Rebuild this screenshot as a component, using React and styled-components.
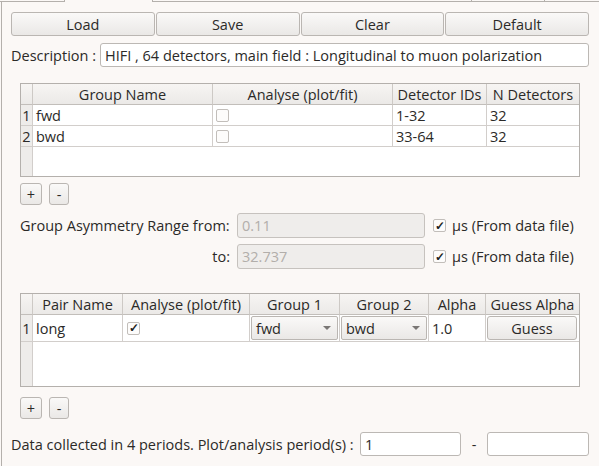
import React from "react";
import styled, { createGlobalStyle } from "styled-components";

const Global = createGlobalStyle`
  html, body { margin: 0; padding: 0; background: #fbf8f6; }
  body { font-family: "Open Sans", "Noto Sans", sans-serif; font-size: 14.5px; color: #2b2a28; }
  * { box-sizing: border-box; }
`;

const Page = styled.div`
  width: 599px;
  height: 466px;
  background: #fbf8f6;
  overflow: hidden;
  display: flex;
  flex-direction: column;
`;

const TabBar = styled.div`
  display: flex;
  height: 2px;
`;

const TabPiece = styled.div`
  width: ${(p) => (p.$w ? `${p.$w}px` : "auto")};
  flex: ${(p) => (p.$w ? "none" : "1")};
  border-bottom: ${(p) => (p.$selected ? "none" : "1px solid #b4b0ac")};
  border-right: ${(p) => (p.$sep ? "1px solid #b4b0ac" : "none")};
`;

const Panel = styled.div`
  flex: 1;
  margin-left: 1px;
  border-left: 1px solid #b4b0ac;
  padding: 10px 10px 0 9px;
  display: flex;
  flex-direction: column;
`;

const ButtonRow = styled.div`
  display: flex;
  gap: 1px;
  height: 24px;
`;

const PushButton = styled.button`
  flex: ${(p) => (p.$w ? "none" : "1")};
  width: ${(p) => (p.$w ? `${p.$w}px` : "auto")};
  height: ${(p) => (p.$h ? `${p.$h}px` : "100%")};
  border: 1px solid #bab6b2;
  border-radius: 3px;
  background: linear-gradient(#faf9f8, #eae8e6);
  font-family: inherit;
  font-size: 14.5px;
  color: #2b2a28;
  padding: 0;
  display: flex;
  align-items: center;
  justify-content: center;
`;

const Row = styled.div`
  display: flex;
  align-items: center;
  margin-top: ${(p) => p.$mt || 0}px;
  margin-left: ${(p) => p.$ml || 0}px;
  gap: ${(p) => p.$gap || 0}px;
`;

const Label = styled.span`
  width: ${(p) => (p.$w ? `${p.$w}px` : "auto")};
  text-align: ${(p) => p.$align || "left"};
  white-space: nowrap;
  flex: none;
`;

const TextField = styled.div`
  width: ${(p) => p.$w}px;
  height: ${(p) => p.$h || 24}px;
  border: 1px solid ${(p) => (p.$disabled ? "#c6c2be" : "#bcb8b4")};
  border-radius: 3px;
  background: ${(p) => (p.$disabled ? "#efedeb" : "#ffffff")};
  color: ${(p) => (p.$disabled ? "#b2aeaa" : "#2b2a28")};
  padding-left: 4px;
  display: flex;
  align-items: center;
  white-space: nowrap;
  overflow: hidden;
  flex: none;
`;

const Check = styled.span`
  width: 13px;
  height: 13px;
  border: 1px solid #c2beba;
  border-radius: 2px;
  background: #fdfcfb;
  display: inline-flex;
  align-items: center;
  justify-content: center;
  flex: none;
  color: #1e1e1e;
  font-size: 12px;
  font-weight: 700;
  line-height: 1;
`;

const CheckWrap = styled.div`
  display: flex;
  align-items: center;
  gap: 6px;
  margin-left: 8px;
`;

const Table = styled.div`
  margin-left: 9px;
  margin-top: ${(p) => p.$mt}px;
  width: 560px;
  height: ${(p) => p.$h}px;
  border: 1px solid #b4b0ac;
  background: #ffffff;
  display: grid;
  grid-template-columns: ${(p) => p.$cols};
  grid-template-rows: ${(p) => p.$rows};
`;

const HeadCell = styled.div`
  background: linear-gradient(#f7f5f3, #ebe9e7);
  border-right: ${(p) => (p.$last ? "none" : "1px solid #cdc9c5")};
  border-bottom: 1px solid #c2beba;
  display: flex;
  align-items: center;
  justify-content: center;
  white-space: nowrap;
  overflow: hidden;
`;

const RowHead = styled.div`
  background: #eeecea;
  border-right: 1px solid #d2cecb;
  border-bottom: ${(p) => (p.$filler ? "none" : "1px solid #d2cecb")};
  display: flex;
  align-items: center;
  justify-content: center;
`;

const Cell = styled.div`
  border-right: ${(p) => (p.$last ? "none" : "1px solid #d2cecb")};
  border-bottom: 1px solid #d2cecb;
  padding: ${(p) => (p.$pad === undefined ? "0 3px" : p.$pad)};
  display: flex;
  align-items: center;
  white-space: nowrap;
  overflow: hidden;
`;

const Filler = styled.div`
  grid-column: 2 / -1;
  background: #ffffff;
`;

const Combo = styled.div`
  width: 100%;
  height: 100%;
  border: 1px solid #bab6b2;
  border-radius: 2px;
  background: linear-gradient(#faf9f8, #eae8e6);
  display: flex;
  align-items: center;
  justify-content: space-between;
  padding: 0 6px 0 4px;
`;

const Arrow = styled.span`
  width: 0;
  height: 0;
  border-left: 4px solid transparent;
  border-right: 4px solid transparent;
  border-top: 4px solid #7a7775;
`;

const SmallButtons = styled.div`
  display: flex;
  gap: 7px;
  margin-left: 9px;
  margin-top: ${(p) => p.$mt}px;
`;

const Dash = styled.span`
  width: 26px;
  text-align: center;
  flex: none;
`;

const groupCols = "12px 180px 180px 94px 92px";
const pairCols = "12px 90px 127px 90px 89px 57px 93px";

const groups = [
  { n: 1, name: "fwd", ids: "1-32", count: "32" },
  { n: 2, name: "bwd", ids: "33-64", count: "32" },
];

export default function App() {
  return (
    <Page>
      <Global />
      <TabBar>
        <TabPiece $w={65} $sep />
        <TabPiece $w={88} $selected $sep />
        <TabPiece $w={319} $sep />
        <TabPiece $w={73} $sep />
        <TabPiece />
      </TabBar>
      <Panel>
        <ButtonRow>
          <PushButton>Load</PushButton>
          <PushButton>Save</PushButton>
          <PushButton>Clear</PushButton>
          <PushButton>Default</PushButton>
        </ButtonRow>

        <Row $mt={7}>
          <Label $w={89}>Description :</Label>
          <TextField $w={489}>HIFI , 64 detectors, main field : Longitudinal to muon polarization</TextField>
        </Row>

        <Table $mt={16} $h={94} $cols={groupCols} $rows="21px 21px 21px 1fr">
          <HeadCell />
          <HeadCell>Group Name</HeadCell>
          <HeadCell>Analyse (plot/fit)</HeadCell>
          <HeadCell>Detector IDs</HeadCell>
          <HeadCell $last>N Detectors</HeadCell>
          {groups.map((g) => (
            <React.Fragment key={g.n}>
              <RowHead>{g.n}</RowHead>
              <Cell>{g.name}</Cell>
              <Cell><Check /></Cell>
              <Cell>{g.ids}</Cell>
              <Cell $last>{g.count}</Cell>
            </React.Fragment>
          ))}
          <RowHead $filler />
          <Filler />
        </Table>

        <SmallButtons $mt={6}>
          <PushButton $w={22} $h={22}>+</PushButton>
          <PushButton $w={20} $h={22}>-</PushButton>
        </SmallButtons>

        <Row $mt={8} $ml={9}>
          <Label $w={210}>Group Asymmetry Range from:</Label>
          <TextField $w={188} $h={25} $disabled style={{ marginLeft: 7 }}>0.11</TextField>
          <CheckWrap>
            <Check>✓</Check>
            <span>μs (From data file)</span>
          </CheckWrap>
        </Row>
        <Row $mt={6} $ml={9}>
          <Label $w={210} $align="right">to:</Label>
          <TextField $w={188} $h={25} $disabled style={{ marginLeft: 7 }}>32.737</TextField>
          <CheckWrap>
            <Check>✓</Check>
            <span>μs (From data file)</span>
          </CheckWrap>
        </Row>

        <Table $mt={24} $h={94} $cols={pairCols} $rows="21px 27px 1fr">
          <HeadCell />
          <HeadCell>Pair Name</HeadCell>
          <HeadCell>Analyse (plot/fit)</HeadCell>
          <HeadCell>Group 1</HeadCell>
          <HeadCell>Group 2</HeadCell>
          <HeadCell>Alpha</HeadCell>
          <HeadCell $last>Guess Alpha</HeadCell>
          <RowHead>1</RowHead>
          <Cell>long</Cell>
          <Cell $pad="0 4px"><Check>✓</Check></Cell>
          <Cell $pad="1px">
            <Combo>fwd<Arrow /></Combo>
          </Cell>
          <Cell $pad="1px">
            <Combo>bwd<Arrow /></Combo>
          </Cell>
          <Cell>1.0</Cell>
          <Cell $last $pad="1px">
            <PushButton $w={90} $h={24}>Guess</PushButton>
          </Cell>
          <RowHead $filler />
          <Filler />
        </Table>

        <SmallButtons $mt={10}>
          <PushButton $w={22} $h={22}>+</PushButton>
          <PushButton $w={20} $h={22}>-</PushButton>
        </SmallButtons>

        <Row $mt={13}>
          <Label $w={349}>Data collected in 4 periods. Plot/analysis period(s) :</Label>
          <TextField $w={101}>1</TextField>
          <Dash>-</Dash>
          <TextField $w={102} />
        </Row>
      </Panel>
    </Page>
  );
}
